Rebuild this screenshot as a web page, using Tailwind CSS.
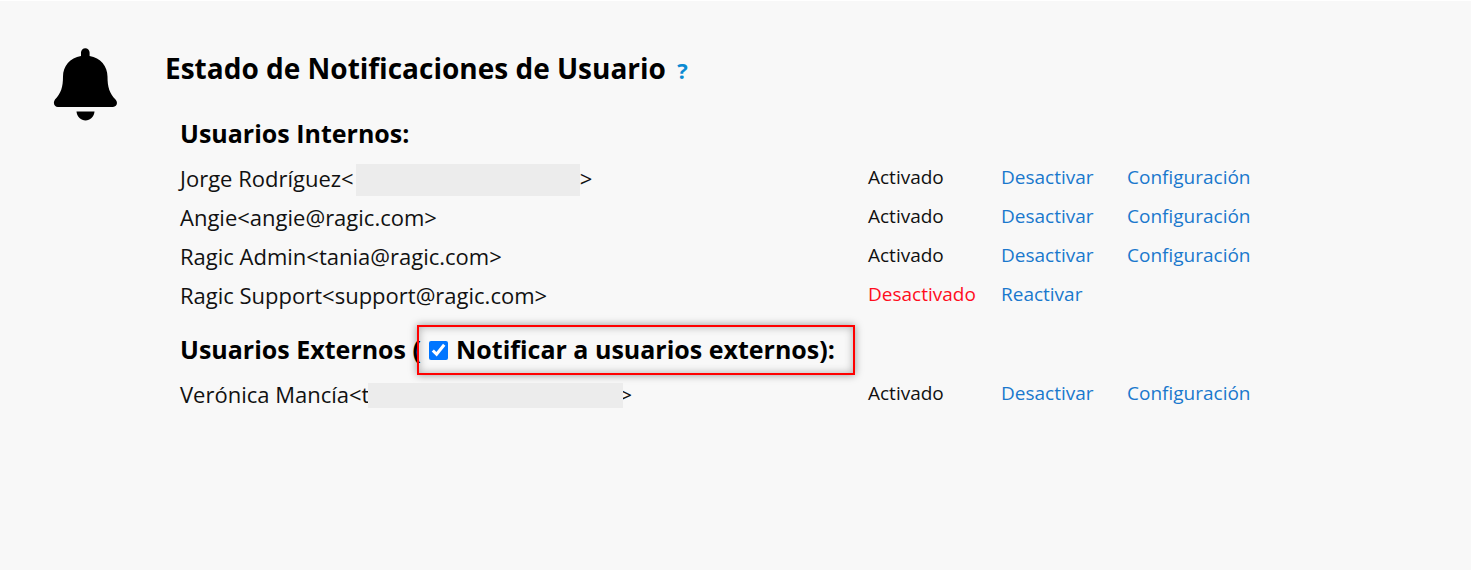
<!DOCTYPE html>
<html lang="es">
<head>
  <meta charset="UTF-8">
  <meta name="viewport" content="width=device-width, initial-scale=1.0">
  <title>Estado de Notificaciones de Usuario</title>
  <script src="https://cdn.jsdelivr.net/npm/@tailwindcss/browser@4"></script>
</head>
<body class="bg-[#f8f8f8] min-h-screen border-t border-white text-black font-['Open_Sans',sans-serif]">
  <main class="flex items-start pt-[47px] pl-[53px] pr-12">
    <!-- Bell icon -->
    <svg class="w-16 h-[73px] shrink-0 mr-12" viewBox="0 0 64 73" fill="currentColor" aria-hidden="true">
      <path d="M28 8V4.500a4.300 4.300 0 0 1 8.600 0V8C47.500 10 54.500 18 54.500 28.500C54.500 39 56.500 45.500 62.500 51.500C65.500 55 63.500 59 60 59H5C1.500 59-0.500 55 2 51.500C8 45.500 10 39 10 28.500C10 18 17 10 28 8Z"/>
      <path d="M23.500 63.500H41.500C41 69 37 72.500 32.500 72.500S24 69 23.500 63.500Z"/>
    </svg>

    <div class="grow min-w-0">
      <h1 class="text-[28px] leading-10 font-bold">Estado de Notificaciones de Usuario <a href="#" class="ml-1 text-[22px] text-[#0a8ad2]">?</a></h1>

      <!-- Internal users -->
      <section class="pl-[15px] pt-[23px]">
        <h2 class="text-[25px] leading-10 font-bold">Usuarios Internos:</h2>
        <table class="w-full table-fixed mt-[5px] text-left">
          <colgroup>
            <col>
            <col class="w-[133px]">
            <col class="w-[126px]">
            <col class="w-[296px]">
          </colgroup>
          <tbody class="text-[19px] whitespace-nowrap text-[#111]">
            <tr class="h-[39px]">
              <td class="text-[22px] leading-8"><div class="flex items-center h-[39px]">Jorge Rodríguez&lt;<span class="w-56 h-8 mt-1 ml-0.5 bg-[#ececec]"></span>&gt;</div></td>
              <td>Activado</td>
              <td><a href="#" class="text-[#1a78cd]">Desactivar</a></td>
              <td><a href="#" class="text-[#1a78cd]">Configuración</a></td>
            </tr>
            <tr class="h-[39px]">
              <td class="text-[22px] leading-8">Angie&lt;angie@ragic.com&gt;</td>
              <td>Activado</td>
              <td><a href="#" class="text-[#1a78cd]">Desactivar</a></td>
              <td><a href="#" class="text-[#1a78cd]">Configuración</a></td>
            </tr>
            <tr class="h-[39px]">
              <td class="text-[22px] leading-8">Ragic Admin&lt;tania@ragic.com&gt;</td>
              <td>Activado</td>
              <td><a href="#" class="text-[#1a78cd]">Desactivar</a></td>
              <td><a href="#" class="text-[#1a78cd]">Configuración</a></td>
            </tr>
            <tr class="h-[39px]">
              <td class="text-[22px] leading-8">Ragic Support&lt;support@ragic.com&gt;</td>
              <td class="text-[#ff0d1d]">Desactivado</td>
              <td><a href="#" class="text-[#1a78cd]">Reactivar</a></td>
              <td></td>
            </tr>
          </tbody>
        </table>
      </section>

      <!-- External users -->
      <section class="pl-[15px] pt-[15px]">
        <h2 class="flex items-center whitespace-pre text-[25px] leading-10 font-bold">Usuarios Externos <label class="relative flex items-center">(<input type="checkbox" checked class="w-[19px] h-[19px] mt-0.5 mx-2 accent-[#0075ff]">Notificar a usuarios externos):<span class="absolute -top-1 -bottom-1.5 left-1 -right-5 border-2 border-[#f00] shadow-[0_0_8px_rgba(0,0,0,0.4),inset_0_0_8px_rgba(0,0,0,0.3)]"></span></label></h2>
        <table class="w-full table-fixed mt-[5px] text-left">
          <colgroup>
            <col>
            <col class="w-[133px]">
            <col class="w-[126px]">
            <col class="w-[296px]">
          </colgroup>
          <tbody class="text-[19px] whitespace-nowrap text-[#111]">
            <tr class="h-[39px]">
              <td class="text-[22px] leading-8"><div class="flex items-center h-[39px]">Verónica Mancía&lt;t<span class="relative w-[255px] h-[25px] mt-1 -ml-px -mr-1 bg-[#ececec]"></span>&gt;</div></td>
              <td>Activado</td>
              <td><a href="#" class="text-[#1a78cd]">Desactivar</a></td>
              <td><a href="#" class="text-[#1a78cd]">Configuración</a></td>
            </tr>
          </tbody>
        </table>
      </section>
    </div>
  </main>
</body>
</html>
